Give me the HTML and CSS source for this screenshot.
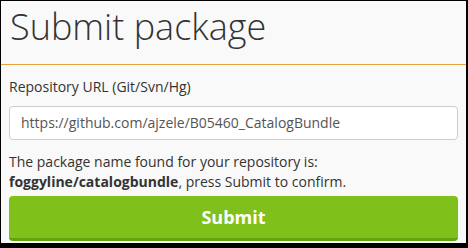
FILE: index.html
```html
<!DOCTYPE html>
<html>
<head>
<meta charset="utf-8">
<link rel="stylesheet" href="styles.css">
</head>
<body>
<div class="frame">
  <h1 class="title">Submit package</h1>
  <div class="form">
    <label class="label">Repository URL (Git/Svn/Hg)</label>
    <div class="input">https://github.com/ajzele/B05460_CatalogBundle</div>
    <p class="note">The package name found for your repository is:<br><strong>foggyline/catalogbundle</strong>, press Submit to confirm.</p>
    <button class="submit">Submit</button>
  </div>
</div>
</body>
</html>
```
FILE: styles.css
```css
html, body {
  margin: 0;
  padding: 0;
  background: #000;
  width: 468px;
  height: 248px;
  overflow: hidden;
}
.frame {
  margin: 1px 2px 0 1px;
  height: 242px;
  background: #f9f9f9;
  font-family: "Open Sans", sans-serif;
  color: #333;
  overflow: hidden;
}
.title {
  margin: 0;
  padding: 3px 0 0 9px;
  height: 59px;
  font-size: 36px;
  font-weight: 300;
  line-height: 46px;
  border-bottom: 1px solid #e8a33d;
  box-sizing: border-box;
  height: 64px;
}
.form {
  padding: 12px 8px 0 8px;
  display: flex;
  flex-direction: column;
}
.label {
  font-size: 14px;
  line-height: 20px;
  margin-bottom: 9px;
}
.input {
  height: 34px;
  box-sizing: border-box;
  border: 1px solid #ccc;
  border-radius: 4px;
  background: #fff;
  font-size: 14px;
  line-height: 32px;
  padding: 0 11px;
  color: #555;
}
.note {
  margin: 12px 0 4px 0;
  font-size: 14px;
  line-height: 20px;
}
.note strong { font-weight: 700; }
.submit {
  height: 45px;
  border: none;
  border-bottom: 3px solid #62a10f;
  border-radius: 4px;
  background: #7fc11a;
  color: #fff;
  font-family: "Open Sans", sans-serif;
  font-weight: 700;
  font-size: 18px;
  padding: 0;
}
```
